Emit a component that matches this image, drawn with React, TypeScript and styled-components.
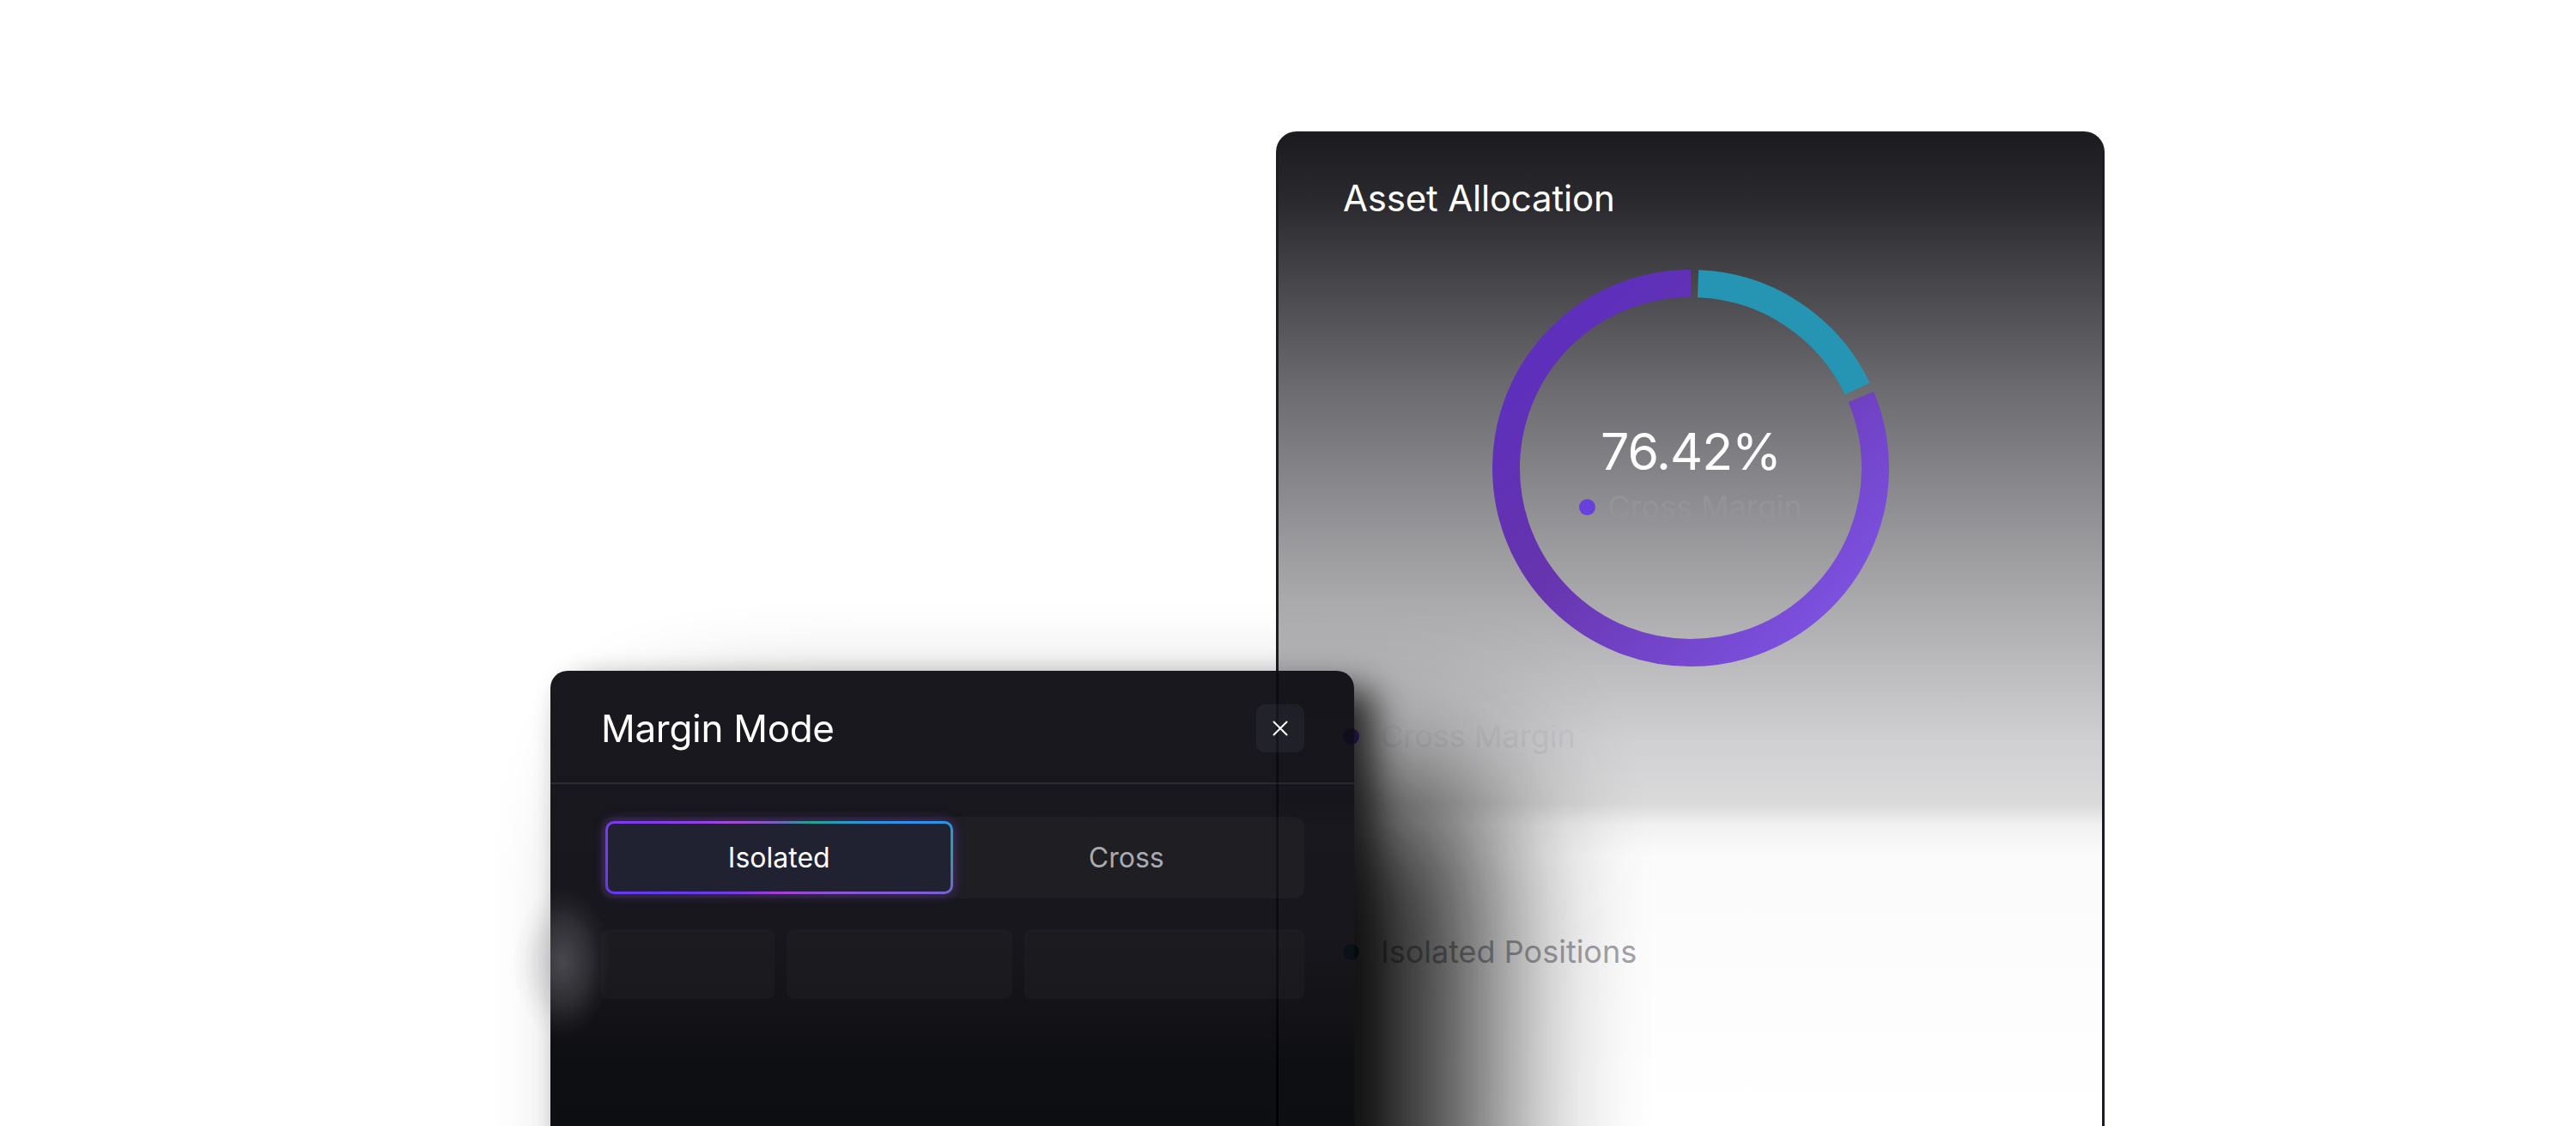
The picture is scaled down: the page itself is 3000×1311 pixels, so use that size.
import React from "react";
import styled, { createGlobalStyle } from "styled-components";

const GlobalStyle = createGlobalStyle`
  html, body { margin: 0; padding: 0; background: #ffffff; }
  body { font-family: Inter, "Noto Sans", "Liberation Sans", sans-serif; -webkit-font-smoothing: antialiased; }
  * { box-sizing: border-box; }
`;

const Stage = styled.div`
  position: relative;
  width: 3000px;
  height: 1311px;
  overflow: hidden;
  background: #ffffff;
  padding: 153px 0 0 1486px;
`;

const Card = styled.section`
  width: 965px;
  height: 1158px;
  border: 3px solid #1c1c22;
  border-bottom: none;
  border-radius: 24px 24px 0 0;
  background: linear-gradient(
    180deg,
    #1b1b20 0px,
    #29292e 78px,
    #47474c 177px,
    #6b6b70 297px,
    #848488 392px,
    #9f9fa2 497px,
    #bcbcbe 623px,
    #d0d0d2 707px,
    #dadadb 780px,
    #f1f1f1 805px,
    #fbfbfb 840px,
    #ffffff 1158px
  );
  display: flex;
  flex-direction: column;
  padding: 54px 0 0 75px;
`;

const Title = styled.h2`
  margin: 0;
  font-size: 42px;
  line-height: 1;
  font-weight: 400;
  color: #ffffff;
  letter-spacing: -0.2px;
`;

const DonutWrap = styled.div`
  position: relative;
  width: 462px;
  height: 462px;
  margin: 62px 0 0 174px;
`;

const DonutCenter = styled.div`
  position: absolute;
  inset: 0;
  display: flex;
  flex-direction: column;
  align-items: center;
  padding-top: 182px;
`;

const Value = styled.div`
  font-size: 59px;
  line-height: 1;
  font-weight: 400;
  color: #ffffff;
  letter-spacing: -1px;
`;

const Legend = styled.div<{ $gap: number; $top: number }>`
  display: flex;
  align-items: center;
  gap: ${(p) => p.$gap}px;
  margin-top: ${(p) => p.$top}px;
`;

const Dot = styled.span<{ $color: string }>`
  width: 19px;
  height: 19px;
  border-radius: 50%;
  background: ${(p) => p.$color};
  flex: none;
`;

const LegendText = styled.span<{ $color: string }>`
  font-size: 36px;
  line-height: 1;
  color: ${(p) => p.$color};
`;

const Modal = styled.section`
  position: absolute;
  left: 641px;
  top: 781px;
  width: 936px;
  height: 620px;
  border-radius: 20px;
  opacity: 0.95;
  background: linear-gradient(
    180deg,
    rgb(12, 12, 18) 0px,
    rgb(11, 11, 17) 300px,
    rgb(7, 7, 11) 400px,
    rgb(2, 3, 6) 455px,
    rgb(1, 2, 5) 100%
  );
  box-shadow:
    140px 128px 180px 8px rgba(0, 0, 0, 0.95),
    24px 20px 40px 0 rgba(0, 0, 0, 0.8);
  display: flex;
  flex-direction: column;

  &::before {
    content: "";
    position: absolute;
    left: -44px;
    top: 250px;
    width: 116px;
    height: 180px;
    pointer-events: none;
    background: radial-gradient(
      closest-side,
      rgba(138, 138, 144, 0.42),
      rgba(138, 138, 144, 0.22) 50%,
      rgba(138, 138, 144, 0.06) 80%,
      rgba(138, 138, 144, 0)
    );
  }
`;

const ModalHeader = styled.header`
  display: flex;
  align-items: center;
  justify-content: space-between;
  padding: 39px 58px 35px 59px;
  border-bottom: 2px solid rgb(31, 31, 39);
`;

const ModalTitle = styled.h3`
  margin: 0;
  font-size: 44px;
  line-height: 1;
  font-weight: 400;
  color: #ffffff;
  letter-spacing: -0.3px;
`;

const CloseButton = styled.button`
  width: 56px;
  height: 56px;
  border: none;
  border-radius: 10px;
  background: rgb(23, 23, 32);
  display: flex;
  align-items: center;
  justify-content: center;
  padding: 0;
  cursor: pointer;
`;

const ModalBody = styled.div`
  padding: 38px 58px 0 59px;
  display: flex;
  flex-direction: column;
  gap: 36px;
`;

const Segmented = styled.div`
  display: grid;
  grid-template-columns: 1fr 1fr;
  padding: 5px;
  height: 95px;
  border-radius: 12px;
  background: rgb(18, 18, 24);
`;

const SegButton = styled.button<{ $active?: boolean }>`
  font-family: inherit;
  font-size: 32px;
  line-height: 1;
  font-weight: 400;
  border-radius: 10px;
  cursor: pointer;
  color: ${(p) => (p.$active ? "#ffffff" : "#a6a6ae")};
  border: 3px solid transparent;
  background: ${(p) =>
    p.$active
      ? `linear-gradient(rgb(22, 23, 38), rgb(22, 23, 38)) padding-box,
         conic-gradient(from 0deg at 50% 50%, #6a5ab8 0deg, #14a08c 45deg, #1e8ef2 76deg, #18a090 88deg, #7b52d2 104deg, #a434d4 180deg, #5a30ee 254deg, #7b2ff0 284deg, #a23fd8 305deg, #6a5ab8 360deg) border-box`
      : "transparent"};
  box-shadow: ${(p) => (p.$active ? "0 0 14px rgba(140, 60, 230, 0.45)" : "none")};
`;

const StatRow = styled.div`
  display: grid;
  grid-template-columns: 202px 263px 1fr;
  gap: 14px;
`;

const StatBox = styled.div`
  height: 81px;
  border-radius: 8px;
  background: rgba(255, 255, 255, 0.022);
`;

const CloseIcon = () => (
  <svg width="18" height="18" viewBox="0 0 18 18" fill="none">
    <path d="M1.5 1.5 16.5 16.5 M16.5 1.5 1.5 16.5" stroke="#ffffff" strokeWidth="2" strokeLinecap="round" />
  </svg>
);

const R = 215;
const C = 2 * Math.PI * R;

const Donut = () => {
  const deg = (d: number) => (d / 360) * C;
  return (
    <svg width="462" height="462" viewBox="0 0 462 462">
      <defs>
        <linearGradient id="purp" x1="1" y1="0" x2="0" y2="1">
          <stop offset="0" stopColor="#5a2dc2" />
          <stop offset="0.45" stopColor="#6634ad" />
          <stop offset="1" stopColor="#8259ec" />
        </linearGradient>
      </defs>
      <g transform="rotate(-90 231 231)">
        <circle
          cx="231"
          cy="231"
          r={R}
          fill="none"
          stroke="url(#purp)"
          strokeWidth="32"
          strokeDasharray={`${deg(292.7)} ${C}`}
          strokeDashoffset={-deg(67.3)}
        />
        <circle
          cx="231"
          cy="231"
          r={R}
          fill="none"
          stroke="#2695b3"
          strokeWidth="32"
          strokeDasharray={`${deg(62.2)} ${C}`}
          strokeDashoffset={-deg(2.3)}
        />
      </g>
    </svg>
  );
};

export default function App() {
  return (
    <>
      <GlobalStyle />
      <Stage>
        <Card>
          <Title>Asset Allocation</Title>
          <DonutWrap>
            <Donut />
            <DonutCenter>
              <Value>76.42%</Value>
              <Legend $gap={14} $top={17}>
                <Dot $color="#6a40dc" />
                <LegendText $color="#949498">Cross Margin</LegendText>
              </Legend>
            </DonutCenter>
          </DonutWrap>
          <Legend $gap={25} $top={63}>
            <Dot $color="#6a40dc" />
            <LegendText $color="#c6c6ca">Cross Margin</LegendText>
          </Legend>
          <Legend $gap={25} $top={215}>
            <Dot $color="#2695b3" />
            <LegendText $color="#a3a3a8">Isolated Positions</LegendText>
          </Legend>
        </Card>
        <Modal>
          <ModalHeader>
            <ModalTitle>Margin Mode</ModalTitle>
            <CloseButton aria-label="Close">
              <CloseIcon />
            </CloseButton>
          </ModalHeader>
          <ModalBody>
            <Segmented>
              <SegButton $active>Isolated</SegButton>
              <SegButton>Cross</SegButton>
            </Segmented>
            <StatRow>
              <StatBox />
              <StatBox />
              <StatBox />
            </StatRow>
          </ModalBody>
        </Modal>
      </Stage>
    </>
  );
}
